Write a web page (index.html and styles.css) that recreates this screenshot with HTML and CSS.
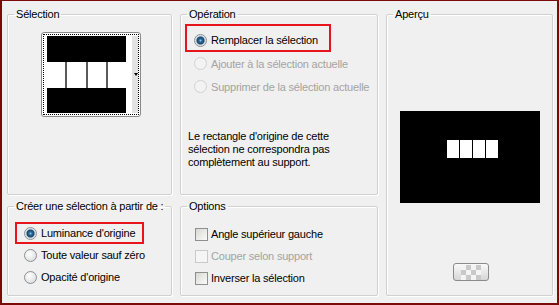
FILE: index.html
```html
<!DOCTYPE html>
<html lang="fr">
<head>
    <meta charset="UTF-8">
    <title>Sélection</title>
    <link rel="stylesheet" href="styles.css">
</head>
<body>
    <div class="dialog">
        <fieldset class="group group-selection">
            <legend>Sélection</legend>
            <div class="thumb">
                <div class="thumb-focus">
                    <div class="thumb-image">
                        <div class="band band-dark"></div>
                        <div class="band band-light">
                            <span></span><span></span><span></span><span></span>
                        </div>
                        <div class="band band-dark band-last"></div>
                    </div>
                    <div class="thumb-scroll"><span class="thumb-arrow"></span></div>
                </div>
            </div>
        </fieldset>

        <fieldset class="group group-operation">
            <legend>Opération</legend>
            <div class="op-body">
                <div class="highlight op-highlight">
                    <div class="choice"><span class="radio checked"></span>Remplacer la sélection</div>
                </div>
                <div class="choice op-row disabled"><span class="radio"></span>Ajouter à la sélection actuelle</div>
                <div class="choice op-row disabled"><span class="radio"></span>Supprimer de la sélection actuelle</div>
                <p class="note">Le rectangle d'origine de cette<br>sélection ne correspondra pas<br>complètement au support.</p>
            </div>
        </fieldset>

        <fieldset class="group group-preview">
            <legend>Aperçu</legend>
            <div class="preview">
                <span></span><span></span><span></span><span></span>
            </div>
            <div class="bg-button"><span class="checker"></span></div>
        </fieldset>

        <fieldset class="group group-source">
            <legend>Créer une sélection à partir de :</legend>
            <div class="source-body">
                <div class="highlight source-highlight">
                    <div class="choice"><span class="radio checked"></span>Luminance d'origine</div>
                </div>
                <div class="choice source-row"><span class="radio"></span>Toute valeur sauf zéro</div>
                <div class="choice source-row"><span class="radio"></span>Opacité d'origine</div>
            </div>
        </fieldset>

        <fieldset class="group group-options">
            <legend>Options</legend>
            <div class="options-body">
                <div class="choice check-row"><span class="checkbox"></span>Angle supérieur gauche</div>
                <div class="choice check-row disabled"><span class="checkbox"></span>Couper selon support</div>
                <div class="choice check-row"><span class="checkbox"></span>Inverser la sélection</div>
            </div>
        </fieldset>
    </div>
</body>
</html>
```

FILE: styles.css
```css
body {
    margin: 0;
    font-family: "Liberation Sans", Arial, sans-serif;
    font-size: 11px;
    letter-spacing: -0.2px;
    color: #000;
}

.dialog {
    width: 559px;
    height: 305px;
    box-sizing: border-box;
    border: 2px solid #7b0a0a;
    border-top-width: 1px;
    background-color: #f0f0f0;
    padding: 6px 4px 0 5px;
    display: grid;
    grid-template-columns: 165px 198px 167px;
    grid-template-rows: 188px 97px;
    column-gap: 8px;
    row-gap: 4px;
}

/* group boxes */
.group {
    margin: 0;
    padding: 0;
    min-width: 0;
    border: 1px solid #d0d0d0;
    box-shadow: 1px 1px 0 #fff, inset 1px 1px 0 #fff;
    border-radius: 2px;
}

.group legend {
    margin-left: 6px;
    padding: 0 2px;
    line-height: 14px;
}

.group-selection { grid-column: 1; grid-row: 1; }
.group-operation { grid-column: 2; grid-row: 1; }
.group-preview { grid-column: 3; grid-row: 1 / span 2; }
.group-source { grid-column: 1; grid-row: 2; }
.group-options { grid-column: 2; grid-row: 2; }

/* thumbnail picker */
.thumb {
    width: 100px;
    height: 85px;
    box-sizing: border-box;
    margin: 11px 0 0 33px;
    padding: 1px;
    border: 1px solid #8a8a8a;
    border-radius: 3px;
    background-color: #fff;
}

.thumb-focus {
    height: 100%;
    box-sizing: border-box;
    border: 1px dotted #000;
    padding: 1px 0 1px 3px;
    display: flex;
}

.thumb-image {
    width: 79px;
    display: flex;
    flex-direction: column;
}

.band {
    height: 26px;
}

.band-last {
    height: 25px;
}

.band-dark {
    background-color: #000;
}

.band-light {
    display: flex;
    gap: 2px;
    background-color: #5a5a5a;
}

.band-light span {
    flex: 1;
    background-color: #fff;
}

.thumb-scroll {
    width: 12px;
    background: linear-gradient(to right, #fff 6px, #e2e2e2 6px);
    display: flex;
    align-items: center;
    justify-content: flex-end;
}

.thumb-arrow {
    width: 0;
    height: 0;
    border-top: 3px solid #000;
    border-left: 2.5px solid transparent;
    border-right: 2.5px solid transparent;
}

/* radio / checkbox rows */
.choice {
    display: flex;
    align-items: center;
    white-space: nowrap;
}

.choice.disabled {
    color: #a3a3a3;
}

.radio {
    width: 13px;
    height: 13px;
    box-sizing: border-box;
    border-radius: 50%;
    border: 1px solid #8c9196;
    background: radial-gradient(circle at 40% 35%, #fff 0, #e6e6e6 60%, #cfcfcf 100%);
    margin-right: 4px;
    flex-shrink: 0;
}

.radio.checked {
    background: radial-gradient(circle, #9fc6e0 0, #2d6c9a 1.5px, #17466e 3.5px, #cdd6dd 4.5px, #f2f2f2 6px);
}

.disabled .radio {
    border-color: #cfd1d3;
    background: #f3f3f3;
}

.checkbox {
    width: 13px;
    height: 13px;
    box-sizing: border-box;
    border: 1px solid #8e8f8f;
    background: linear-gradient(135deg, #d8d8d3, #fbfbfb);
    margin-right: 3px;
    flex-shrink: 0;
}

.disabled .checkbox {
    border-color: #cacaca;
    background: #f5f5f5;
}

.highlight {
    border: 2px solid #e8141b;
    box-sizing: border-box;
    display: inline-block;
}

/* Opération */
.op-body {
    padding: 3px 0 0 4px;
}

.op-highlight {
    height: 28px;
    padding: 4px 11px 0 7px;
}

.op-highlight .choice {
    height: 20px;
}

.op-row {
    height: 23px;
    padding-left: 9px;
}

.note {
    margin: 32px 0 0 3px;
    line-height: 13px;
}

/* Créer une sélection */
.source-body {
    padding: 9px 0 0 7px;
}

.source-highlight {
    height: 22px;
    padding: 0 7px 0 7px;
}

.source-highlight .choice {
    height: 18px;
}

.source-row {
    height: 22px;
    padding-left: 9px;
}

/* Options */
.options-body {
    padding: 10px 0 0 14px;
}

.check-row {
    height: 22px;
}

/* Aperçu */
.preview {
    width: 140px;
    height: 92px;
    box-sizing: border-box;
    margin: 90px 0 0 13px;
    padding: 29px 0 0 47px;
    background-color: #000;
    display: flex;
    gap: 1px;
}

.preview span {
    width: 12px;
    height: 18px;
    background-color: #fff;
}

.bg-button {
    width: 36px;
    height: 18px;
    box-sizing: border-box;
    margin: 60px 0 0 66px;
    border: 1px solid #8a8a8a;
    border-radius: 3px;
    background: linear-gradient(#fafafa, #d6d6d6);
    display: flex;
    align-items: center;
    justify-content: center;
}

.checker {
    width: 20px;
    height: 15px;
    background-color: #f4f4f4;
    background-image: conic-gradient(#c9c9c9 25%, transparent 0 50%, #c9c9c9 0 75%, transparent 0);
    background-size: 10px 10px;
}
```
